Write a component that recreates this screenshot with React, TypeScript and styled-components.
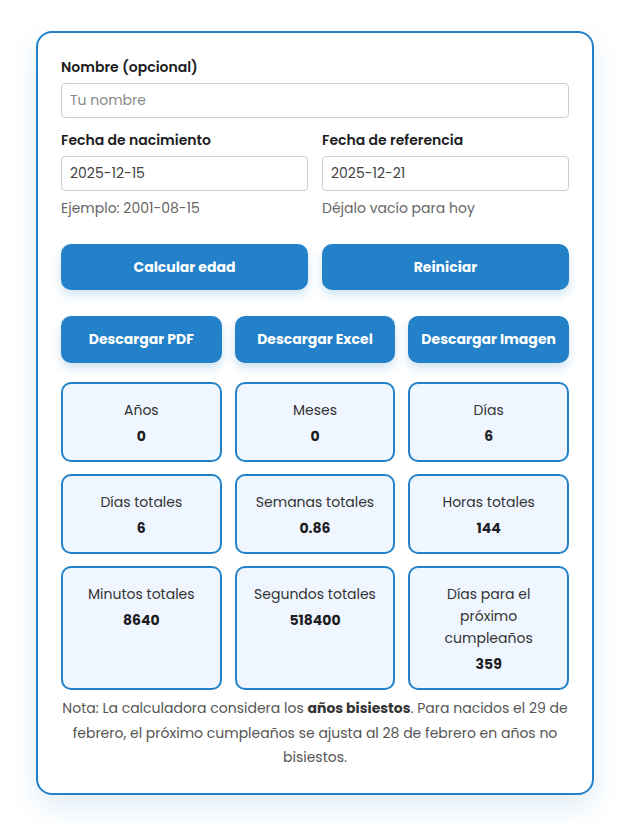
import styled, { createGlobalStyle } from 'styled-components'

const GlobalStyle = createGlobalStyle`
  body {
    margin: 0;
    background: #ffffff;
    font-family: "Poppins", "Open Sans", "Noto Sans", sans-serif;
    color: #222;
  }
`

const BLUE = '#2281c9'

const Page = styled.div`
  padding: 31px 0 30px 36px;
`

const Card = styled.div`
  width: 558px;
  box-sizing: border-box;
  border: 2px solid ${BLUE};
  border-radius: 16px;
  background: #fff;
  padding: 24px 23px 23px;
  box-shadow: 0 12px 28px rgba(34, 129, 201, 0.14);
`

const Field = styled.div`
  display: flex;
  flex-direction: column;
  min-width: 0;
`

const Label = styled.label`
  font-size: 14px;
  font-weight: 600;
  line-height: 21px;
  color: #1d1d1f;
  margin-bottom: 5px;
`

const Input = styled.input`
  width: 100%;
  height: 35px;
  box-sizing: border-box;
  border: 1px solid #cfcfcf;
  border-radius: 4px;
  padding: 0 8px;
  font-family: inherit;
  font-size: 14px;
  color: #444;
  outline: none;
  &::placeholder {
    color: #8a8a8a;
  }
`

const Hint = styled.div`
  font-size: 14px;
  line-height: 21px;
  color: #666;
  margin-top: 7px;
`

const TwoCols = styled.div<{ $top?: number }>`
  display: grid;
  grid-template-columns: minmax(0, 1fr) minmax(0, 1fr);
  column-gap: 14px;
  margin-top: ${p => p.$top ?? 0}px;
`

const ThreeCols = styled.div<{ $top?: number }>`
  display: grid;
  grid-template-columns: repeat(3, minmax(0, 1fr));
  gap: 12px 13px;
  margin-top: ${p => p.$top ?? 0}px;
`

const Button = styled.button<{ $h?: number }>`
  height: ${p => p.$h ?? 46}px;
  border: none;
  border-radius: 10px;
  background: ${BLUE};
  color: #fff;
  font-family: inherit;
  font-size: 14px;
  font-weight: 700;
  box-shadow: 0 5px 10px rgba(34, 129, 201, 0.22);
  cursor: pointer;
`

const Stat = styled.div`
  border: 2px solid ${BLUE};
  border-radius: 10px;
  background: #eff6ff;
  padding: 15px 12px 13px;
  text-align: center;
`

const StatLabel = styled.div`
  font-size: 14px;
  line-height: 22px;
  color: #333;
`

const StatValue = styled.div`
  font-size: 14px;
  font-weight: 700;
  line-height: 21px;
  color: #1d1d1f;
  margin-top: 5px;
`

const Note = styled.p`
  margin: 6px 0 0;
  font-size: 14px;
  line-height: 24.5px;
  color: #555;
  text-align: center;
  b {
    color: #333;
  }
`

const stats = [
  ['Años', '0'],
  ['Meses', '0'],
  ['Días', '6'],
  ['Días totales', '6'],
  ['Semanas totales', '0.86'],
  ['Horas totales', '144'],
  ['Minutos totales', '8640'],
  ['Segundos totales', '518400'],
  ['Días para el próximo cumpleaños', '359'],
]

export default function App() {
  return (
    <Page>
      <GlobalStyle />
      <Card>
        <Field>
          <Label>Nombre (opcional)</Label>
          <Input placeholder="Tu nombre" />
        </Field>
        <TwoCols $top={12}>
          <Field>
            <Label>Fecha de nacimiento</Label>
            <Input defaultValue="2025-12-15" />
            <Hint>Ejemplo: 2001-08-15</Hint>
          </Field>
          <Field>
            <Label>Fecha de referencia</Label>
            <Input defaultValue="2025-12-21" />
            <Hint>Déjalo vacío para hoy</Hint>
          </Field>
        </TwoCols>
        <TwoCols $top={25}>
          <Button>Calcular edad</Button>
          <Button>Reiniciar</Button>
        </TwoCols>
        <ThreeCols $top={26}>
          <Button $h={47}>Descargar PDF</Button>
          <Button $h={47}>Descargar Excel</Button>
          <Button $h={47}>Descargar Imagen</Button>
        </ThreeCols>
        <ThreeCols $top={19}>
          {stats.map(([label, value]) => (
            <Stat key={label}>
              <StatLabel>{label}</StatLabel>
              <StatValue>{value}</StatValue>
            </Stat>
          ))}
        </ThreeCols>
        <Note>
          Nota: La calculadora considera los <b>años bisiestos</b>. Para nacidos el 29 de
          febrero, el próximo cumpleaños se ajusta al 28 de febrero en años no bisiestos.
        </Note>
      </Card>
    </Page>
  )
}
